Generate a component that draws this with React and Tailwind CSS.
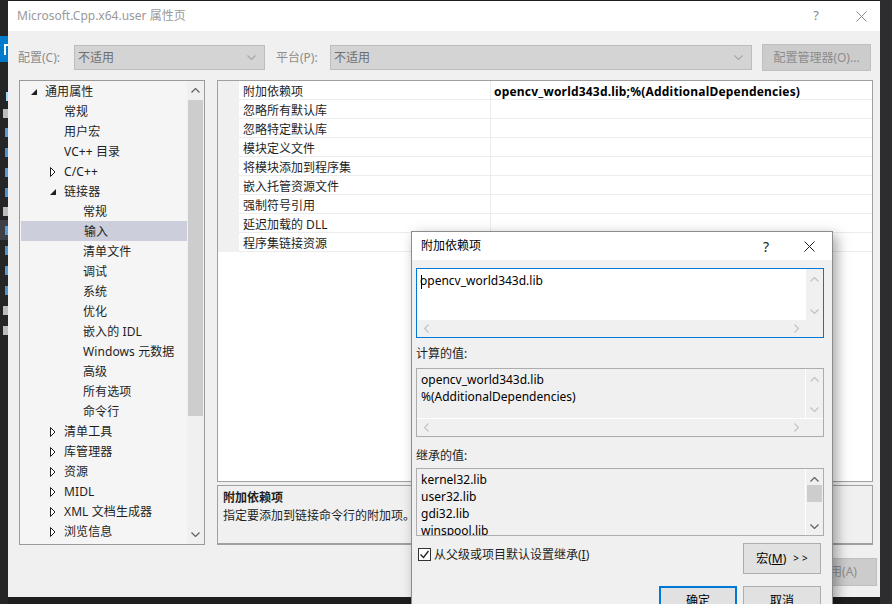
import React from "react";

const tree = [
  { t: "通用属性", l: 0, s: "open" },
  { t: "常规", l: 1 },
  { t: "用户宏", l: 1 },
  { t: "VC++ 目录", l: 1 },
  { t: "C/C++", l: 1, s: "closed" },
  { t: "链接器", l: 1, s: "open" },
  { t: "常规", l: 2 },
  { t: "输入", l: 2, sel: true },
  { t: "清单文件", l: 2 },
  { t: "调试", l: 2 },
  { t: "系统", l: 2 },
  { t: "优化", l: 2 },
  { t: "嵌入的 IDL", l: 2 },
  { t: "Windows 元数据", l: 2 },
  { t: "高级", l: 2 },
  { t: "所有选项", l: 2 },
  { t: "命令行", l: 2 },
  { t: "清单工具", l: 1, s: "closed" },
  { t: "库管理器", l: 1, s: "closed" },
  { t: "资源", l: 1, s: "closed" },
  { t: "MIDL", l: 1, s: "closed" },
  { t: "XML 文档生成器", l: 1, s: "closed" },
  { t: "浏览信息", l: 1, s: "closed" },
];

const indent = ["pl-[9px]", "pl-[28px]", "pl-[47px]"];

const props = [
  ["附加依赖项", "opencv_world343d.lib;%(AdditionalDependencies)"],
  ["忽略所有默认库", ""],
  ["忽略特定默认库", ""],
  ["模块定义文件", ""],
  ["将模块添加到程序集", ""],
  ["嵌入托管资源文件", ""],
  ["强制符号引用", ""],
  ["延迟加载的 DLL", ""],
  ["程序集链接资源", ""],
];

function Chev({ dir = "down", color = "#606060" }) {
  const pts = {
    up: "0.5,4.5 4.5,0.5 8.5,4.5",
    down: "0.5,0.5 4.5,4.5 8.5,0.5",
    left: "4.5,0.5 0.5,4.5 4.5,8.5",
    right: "0.5,0.5 4.5,4.5 0.5,8.5",
  }[dir];
  const vert = dir === "up" || dir === "down";
  return (
    <svg width={vert ? 9 : 5} height={vert ? 5 : 9} className="block">
      <polyline points={pts} fill="none" stroke={color} strokeWidth="1.2" />
    </svg>
  );
}

function Close({ color = "#000" }) {
  return (
    <svg width="11" height="11" className="block">
      <line x1="0.5" y1="0.5" x2="10.5" y2="10.5" stroke={color} strokeWidth="1" />
      <line x1="10.5" y1="0.5" x2="0.5" y2="10.5" stroke={color} strokeWidth="1" />
    </svg>
  );
}

function Tri({ s }) {
  if (s === "open")
    return (
      <svg width="6" height="6" className="block">
        <polygon points="6,0 6,6 0,6" fill="#1e1e1e" />
      </svg>
    );
  if (s === "closed")
    return (
      <svg width="6" height="10" className="block">
        <polygon points="0.5,0.5 5,5 0.5,9.5" fill="#fff" stroke="#1e1e1e" strokeWidth="1" />
      </svg>
    );
  return null;
}

function Tree() {
  return (
    <div className="w-[186px] h-full border border-[#9a9a9a] bg-[#f5f5f5] flex">
      <div className="flex-1 flex flex-col">
        {tree.map((it, i) => (
          <div
            key={i}
            className={
              "h-[20px] flex items-center pt-[2px] " +
              indent[it.l] +
              (it.sel ? " bg-[#cccedb] ml-[1px]" : "")
            }
          >
            <div className="w-[16px] flex items-center -mt-[1px]">
              <div className="ml-[2px]">
                <Tri s={it.s} />
              </div>
            </div>
            <span className="whitespace-nowrap text-[#1e1e1e] tracking-[0.1px]">{it.t}</span>
          </div>
        ))}
      </div>
      <div className="w-[17px] bg-[#f0f0f0] flex flex-col items-center">
        <div className="h-[19px] flex items-center">
          <Chev dir="up" />
        </div>
        <div className="w-[15px] h-[316px] bg-[#cdcdcd]" />
        <div className="flex-1" />
        <div className="h-[19px] flex items-center">
          <Chev dir="down" />
        </div>
      </div>
    </div>
  );
}

function Grid() {
  return (
    <div className="h-[403px] border border-[#a0a0a0] bg-white flex flex-col">
      {props.map(([n, v], i) => (
        <div key={i} className="flex h-[19px]">
          <div className="w-[21px] bg-[#f0f0f0]" />
          <div className="w-[252px] border-b border-r border-[#ececec] pl-[4px] pt-[3px] flex items-center text-[#1e1e1e] whitespace-nowrap">
            {n}
          </div>
          <div className="flex-1 border-b border-[#ececec] pl-[3px] pt-[3px] flex items-center font-bold text-[#000] whitespace-nowrap tracking-[0.2px]">
            {v}
          </div>
        </div>
      ))}
    </div>
  );
}

function Combo({ w, text }) {
  return (
    <div className={"h-[25px] bg-[#d4d4d4] border border-[#bdbdbd] flex items-center pl-[3px] pr-[8px] justify-between " + w}>
      <span className="text-[#6d6d6d]">{text}</span>
      <Chev dir="down" color="#a8a8a8" />
    </div>
  );
}

function MainWindow() {
  return (
    <div className="w-[872px] h-[596px] mt-[1px] bg-[#f0f0f0] flex flex-col">
      <div className="h-[30px] bg-white flex items-center pl-[9px] pr-[13px]">
        <span className="text-[#999999] flex-1 whitespace-nowrap">Microsoft.Cpp.x64.user 属性页</span>
        <span className="text-[#8a8a8a] text-[13px] mr-[37px]">?</span>
        <Close color="#8a8a8a" />
      </div>
      <div className="mt-[13px] h-[27px] flex items-center pl-[10px]">
        <span className="w-[56px] text-[#8d8d8d] whitespace-nowrap">配置(C):</span>
        <Combo w="w-[191px]" text="不适用" />
        <span className="ml-[11px] w-[54px] text-[#8d8d8d] whitespace-nowrap">平台(P):</span>
        <Combo w="w-[422px]" text="不适用" />
        <div className="ml-[10px] w-[109px] h-[27px] bg-[#cccccc] border border-[#bfbfbf] flex items-center justify-center text-[#8d8d8d] whitespace-nowrap">
          配置管理器(O)...
        </div>
      </div>
      <div className="mt-[9px] h-[465px] flex pl-[11px]">
        <Tree />
        <div className="ml-[12px] w-[656px] flex flex-col">
          <Grid />
          <div className="mt-[3px] h-[60px] border border-b-2 border-[#a0a0a0] bg-[#f0f0f0] pl-[5px] pt-[3px] leading-[18px]">
            <div className="font-bold text-[#1e1e1e]">附加依赖项</div>
            <div className="text-[#1e1e1e]">指定要添加到链接命令行的附加项。</div>
          </div>
        </div>
      </div>
      <div className="mt-[13px] flex justify-end pr-[3px] gap-[8px]">
        <div className="w-[79px] h-[28px] bg-[#e1e1e1] border border-[#adadad] flex items-center justify-center">确定</div>
        <div className="w-[79px] h-[28px] bg-[#e1e1e1] border border-[#adadad] flex items-center justify-center">取消</div>
        <div className="w-[79px] h-[28px] bg-[#cccccc] border border-[#bfbfbf] flex items-center justify-center text-[#8d8d8d]">
          应用(A)
        </div>
      </div>
    </div>
  );
}

function VScroll({ h, thumb, arrow = "#c2c2c2", pt = "pt-[8px]", pb = "pb-[6px]" }) {
  return (
    <div className={"w-[17px] bg-[#f0f0f0] flex flex-col items-center justify-between " + h + " " + pt + " " + pb}>
      <Chev dir="up" color={arrow} />
      {thumb}
      <Chev dir="down" color={arrow} />
    </div>
  );
}

function Dialog() {
  return (
    <div className="absolute left-[411px] top-[231px] w-[422px] h-[390px] border border-[#8c8c8c] bg-[#f0f0f0] shadow-[4px_4px_12px_rgba(0,0,0,0.35)] flex flex-col">
      <div className="h-[28px] bg-white flex items-center pl-[9px] pr-[17px]">
        <span className="flex-1 text-[#000]">附加依赖项</span>
        <span className="text-[14px] text-[#222] mr-[35px]">?</span>
        <Close color="#222" />
      </div>
      <div className="flex flex-col pl-[4px] pr-[8px]">
        {/* edit box */}
        <div className="mt-[8px] h-[70px] border border-[#0078d7] bg-white flex flex-col">
          <div className="flex h-[51px]">
            <div className="flex-1 pl-[4px] pt-[3px] leading-[17px] whitespace-nowrap">
              <span className="inline-block w-px h-[14px] bg-black align-middle -mr-[2px]" />
              opencv_world343d.lib
            </div>
            <VScroll h="h-[51px]" />
          </div>
          <div className="h-[17px] bg-[#f0f0f0] flex items-center justify-between pl-[7px] pr-[24px]">
            <Chev dir="left" color="#c2c2c2" />
            <Chev dir="right" color="#c2c2c2" />
          </div>
        </div>
        <div className="mt-[7px] h-[18px] leading-[18px] text-[#1e1e1e]">计算的值:</div>
        {/* computed box */}
        <div className="mt-[5px] h-[69px] border border-[#adadad] bg-[#f0f0f0] flex flex-col">
          <div className="flex h-[50px] border-b border-white">
            <div className="flex-1 border-r border-white pl-[4px] pt-[2px] leading-[17px] whitespace-nowrap">
              <div>opencv_world343d.lib</div>
              <div>%(AdditionalDependencies)</div>
            </div>
            <VScroll h="h-[49px]" />
          </div>
          <div className="flex-1 flex items-center justify-between pl-[7px] pr-[24px]">
            <Chev dir="left" color="#c2c2c2" />
            <Chev dir="right" color="#c2c2c2" />
          </div>
        </div>
        <div className="mt-[10px] h-[18px] leading-[18px] text-[#1e1e1e]">继承的值:</div>
        {/* inherited box */}
        <div className="mt-[3px] h-[68px] border border-[#adadad] bg-[#f0f0f0] flex">
          <div className="flex-1 border-r border-white pl-[4px] pt-[2px] leading-[17px] whitespace-nowrap overflow-hidden">
            <div>kernel32.lib</div>
            <div>user32.lib</div>
            <div>gdi32.lib</div>
            <div>winspool.lib</div>
          </div>
          <div className="w-[17px] flex flex-col items-center pt-[8px] pb-[6px]">
            <Chev dir="up" color="#606060" />
            <div className="mt-[3px] w-[15px] h-[17px] bg-[#cdcdcd]" />
            <div className="flex-1" />
            <Chev dir="down" color="#606060" />
          </div>
        </div>
        {/* checkbox row */}
        <div className="mt-[7px] h-[31px] flex pr-[3px]">
          <div className="flex-1 flex items-start pt-[4px] pl-[2px]">
            <div className="w-[13px] h-[13px] border border-[#333] bg-white flex items-center justify-center mt-[1px]">
              <svg width="11" height="11" className="block">
                <polyline points="1.5,5.5 4.5,8.5 9.5,2" fill="none" stroke="#222" strokeWidth="1.3" />
              </svg>
            </div>
            <span className="ml-[3px] leading-[16px] text-[#1e1e1e]">
              从父级或项目默认设置继承(<span className="underline">I</span>)
            </span>
          </div>
          <div className="w-[78px] h-[31px] bg-[#e1e1e1] border border-[#adadad] flex items-center justify-center whitespace-nowrap pl-[3px]">
            宏(<span className="underline">M</span>)<span className="ml-[7px] text-[10px] tracking-[3px]">&gt;&gt;</span>
          </div>
        </div>
        <div className="mt-[12px] flex justify-end gap-[6px] pr-[3px]">
          <div className="w-[78px] h-[30px] bg-[#e1e1e1] border-2 border-[#0078d7] flex items-center justify-center">确定</div>
          <div className="w-[78px] h-[30px] bg-[#e1e1e1] border border-[#adadad] flex items-center justify-center">取消</div>
        </div>
      </div>
    </div>
  );
}

function Strip({ h, bg = "" }) {
  return <div className={h + " " + bg} />;
}

function Mark({ h, w, color, bg = "" }) {
  return (
    <div className={"flex justify-end items-center " + h + " " + bg}>
      <div className={w + " h-[9px] " + color} />
    </div>
  );
}

function DarkLeft() {
  return (
    <div className="w-[8px] h-full bg-[#252526] flex flex-col overflow-hidden">
      <Strip h="h-[36px]" />
      <div className="h-[26px] bg-[#007acc] flex items-center justify-end">
        <div className="w-[4px] h-[11px] border-l-2 border-t-2 border-white" />
      </div>
      <Strip h="h-[26px]" />
      <Mark h="h-[16px]" w="w-[2px]" color="bg-[#9cdcfe]" />
      <Mark h="h-[18px]" w="w-[5px]" color="bg-[#bdbdbd]" />
      <Mark h="h-[20px]" w="w-[3px]" color="bg-[#569cd6]" />
      <Mark h="h-[20px]" w="w-[3px]" color="bg-[#4e94ce]" />
      <Mark h="h-[20px]" w="w-[3px]" color="bg-[#569cd6]" />
      <Mark h="h-[20px]" w="w-[3px]" color="bg-[#4e94ce]" />
      <Mark h="h-[18px]" w="w-[5px]" color="bg-[#bdbdbd]" />
      <Mark h="h-[20px]" w="w-[3px]" color="bg-[#569cd6]" bg="bg-[#3f3f46]" />
      <Mark h="h-[20px]" w="w-[3px]" color="bg-[#4e94ce]" />
      <Mark h="h-[20px]" w="w-[3px]" color="bg-[#569cd6]" />
      <Mark h="h-[20px]" w="w-[3px]" color="bg-[#4e94ce]" />
      <Mark h="h-[20px]" w="w-[5px]" color="bg-[#bdbdbd]" />
      <Mark h="h-[20px]" w="w-[5px]" color="bg-[#bdbdbd]" />
    </div>
  );
}

export default function App() {
  return (
    <div className="relative w-[892px] h-[604px] overflow-hidden bg-[#1e1e1e] font-['Noto_Sans','Noto_Sans_CJK_SC',sans-serif] text-[12px] text-black">
      <div className="flex h-full">
        <DarkLeft />
        <MainWindow />
        <div className="flex-1 bg-[#2d2d30]" />
      </div>
      <Dialog />
    </div>
  );
}
